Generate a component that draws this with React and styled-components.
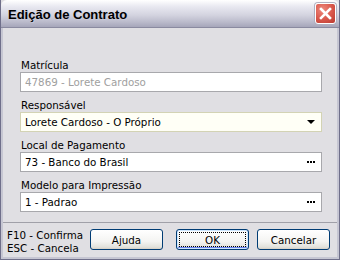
import React from 'react'
import styled, { createGlobalStyle } from 'styled-components'

const Global = createGlobalStyle`
  html, body {
    margin: 0;
    padding: 0;
    background: #ffffff;
  }
  body {
    font-family: "DejaVu Sans", Verdana, sans-serif;
    font-size: 10px;
  }
`

const App = () => {
  return (
    <Window>
      <Global />
      <TitleBar>
        <Title>Edição de Contrato</Title>
        <CloseButton aria-label="Fechar">
          <svg width="13" height="13" viewBox="0 0 13 13">
            <path d="M2 2 L11 11 M11 2 L2 11" stroke="#fff" strokeWidth="2.6" strokeLinecap="square" />
          </svg>
        </CloseButton>
      </TitleBar>
      <Body>
        <Form>
          <Field>
            <Label>Matrícula</Label>
            <Input disabled>47869 - Lorete Cardoso</Input>
          </Field>
          <Field>
            <Label>Responsável</Label>
            <Input focused>
              Lorete Cardoso - O Próprio
              <Arrow />
            </Input>
          </Field>
          <Field>
            <Label>Local de Pagamento</Label>
            <Input>
              73 - Banco do Brasil
              <Dots>
                <i /><i /><i />
              </Dots>
            </Input>
          </Field>
          <Field>
            <Label>Modelo para Impressão</Label>
            <Input>
              1 - Padrao
              <Dots>
                <i /><i /><i />
              </Dots>
            </Input>
          </Field>
        </Form>
        <Footer>
          <Hints>
            <span>F10 - Confirma</span>
            <span>ESC - Cancela</span>
          </Hints>
          <Button>Ajuda</Button>
          <Button primary style={{ marginLeft: 13 }}>
            <Focus>OK</Focus>
          </Button>
          <Button style={{ marginLeft: 8 }}>Cancelar</Button>
        </Footer>
      </Body>
    </Window>
  )
}

export default App

const Window = styled.div`
  width: 340px;
  height: 260px;
  box-sizing: border-box;
  display: flex;
  flex-direction: column;
  background: #e0dfe3;
  border: 1px solid #6f6f8a;
  border-top: none;
  font-family: "DejaVu Sans", Verdana, sans-serif;
  font-size: 10.3px;
  color: #000;
  overflow: hidden;
`

const TitleBar = styled.div`
  height: 28px;
  flex-shrink: 0;
  display: flex;
  align-items: center;
  justify-content: space-between;
  padding: 0 3px 0 7px;
  box-sizing: border-box;
  border-bottom: 1px solid #8a8aa0;
  border-radius: 6px 6px 0 0;
  background: linear-gradient(
    to bottom,
    #ffffff 0%,
    #e8e8f0 25%,
    #d4d4e0 55%,
    #bcbccc 80%,
    #a6a6ba 100%
  );
`

const Title = styled.span`
  font-family: "Liberation Sans", Arial, sans-serif;
  font-weight: bold;
  font-size: 13px;
  color: #000;
  text-shadow: 1px 1px 0 #c8c8d8;
  padding-top: 1px;
`

const CloseButton = styled.div`
  width: 21px;
  height: 21px;
  box-sizing: border-box;
  border: 1px solid #ffffff;
  border-radius: 3px;
  display: flex;
  align-items: center;
  justify-content: center;
  background: radial-gradient(circle at 35% 30%, #ee8a7e 0%, #d8564a 55%, #b83a30 100%);
  box-shadow: 0 0 0 1px #b0b0c0;
`

const Body = styled.div`
  flex: 1;
  display: flex;
  flex-direction: column;
  border-left: 2px solid #c6c6d2;
  border-right: 2px solid #c6c6d2;
  border-bottom: 2px solid #c6c6d2;
`

const Form = styled.div`
  display: flex;
  flex-direction: column;
  gap: 4px;
  padding: 28px 15px 10px 17px;
  border-bottom: 1px solid #a0a0a8;
`

const Field = styled.div`
  display: flex;
  flex-direction: column;
`

const Label = styled.div`
  height: 16px;
  line-height: 18px;
  padding-left: 1px;
`

const Input = styled.div`
  height: 20px;
  box-sizing: border-box;
  display: flex;
  align-items: center;
  justify-content: space-between;
  padding: 0 6px 0 4px;
  background: ${p => (p.focused ? '#fffff6' : '#ffffff')};
  border: 1px solid ${p => (p.focused ? '#d3d3b4' : '#a8a8ac')};
  color: ${p => (p.disabled ? '#a0a0a0' : '#000')};
`

const Arrow = styled.span`
  width: 0;
  height: 0;
  border-left: 4px solid transparent;
  border-right: 4px solid transparent;
  border-top: 4px solid #000;
`

const Dots = styled.span`
  display: flex;
  gap: 1px;
  i {
    display: block;
    width: 2px;
    height: 2px;
    background: #000;
  }
`

const Footer = styled.div`
  flex: 1;
  display: flex;
  align-items: center;
  padding: 0 5px 1px 4px;
`

const Hints = styled.div`
  display: flex;
  flex-direction: column;
  line-height: 13px;
  width: 83px;
  padding-top: 4px;
`

const Button = styled.div`
  width: 73px;
  height: 21px;
  box-sizing: border-box;
  border: 1px solid #003c74;
  border-radius: 3px;
  display: flex;
  align-items: center;
  justify-content: center;
  background: linear-gradient(to bottom, #ffffff 0%, #f4f4f2 60%, #e2e2dc 90%, #d6d0c5 100%);
  box-shadow: ${p => (p.primary ? 'inset 0 0 0 1px #cee7ff, inset 0 -1px 0 1px #6982ee' : 'none')};
`

const Focus = styled.span`
  display: flex;
  align-items: center;
  justify-content: center;
  width: 65px;
  height: 13px;
  border: 1px dotted #000;
`
